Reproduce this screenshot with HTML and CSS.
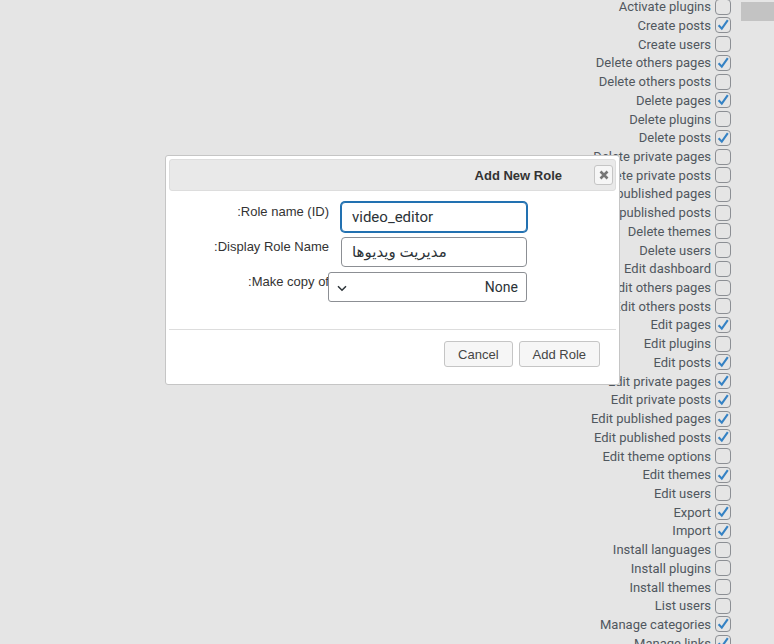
FILE: index.html
```html
<!DOCTYPE html>
<html lang="en">

<head>
    <meta charset="UTF-8">
    <meta name="viewport" content="width=device-width, initial-scale=1.0">
    <title>Add New Role</title>

    <link rel="stylesheet" href="styles.css">
</head>

<body>
    <div id="page">
        <ul class="caps">
            <li class="cap">Activate plugins <span class="box"></span></li>
            <li class="cap">Create posts <span class="box on"></span></li>
            <li class="cap">Create users <span class="box"></span></li>
            <li class="cap">Delete others pages <span class="box on"></span></li>
            <li class="cap">Delete others posts <span class="box"></span></li>
            <li class="cap">Delete pages <span class="box on"></span></li>
            <li class="cap">Delete plugins <span class="box"></span></li>
            <li class="cap">Delete posts <span class="box on"></span></li>
            <li class="cap">Delete private pages <span class="box"></span></li>
            <li class="cap">Delete private posts <span class="box"></span></li>
            <li class="cap">Delete published pages <span class="box"></span></li>
            <li class="cap">Delete published posts <span class="box"></span></li>
            <li class="cap">Delete themes <span class="box"></span></li>
            <li class="cap">Delete users <span class="box"></span></li>
            <li class="cap">Edit dashboard <span class="box"></span></li>
            <li class="cap">Edit others pages <span class="box"></span></li>
            <li class="cap">Edit others posts <span class="box"></span></li>
            <li class="cap">Edit pages <span class="box on"></span></li>
            <li class="cap">Edit plugins <span class="box"></span></li>
            <li class="cap">Edit posts <span class="box on"></span></li>
            <li class="cap">Edit private pages <span class="box on"></span></li>
            <li class="cap">Edit private posts <span class="box on"></span></li>
            <li class="cap">Edit published pages <span class="box on"></span></li>
            <li class="cap">Edit published posts <span class="box on"></span></li>
            <li class="cap">Edit theme options <span class="box"></span></li>
            <li class="cap">Edit themes <span class="box on"></span></li>
            <li class="cap">Edit users <span class="box"></span></li>
            <li class="cap">Export <span class="box on"></span></li>
            <li class="cap">Import <span class="box on"></span></li>
            <li class="cap">Install languages <span class="box"></span></li>
            <li class="cap">Install plugins <span class="box"></span></li>
            <li class="cap">Install themes <span class="box"></span></li>
            <li class="cap">List users <span class="box"></span></li>
            <li class="cap">Manage categories <span class="box on"></span></li>
            <li class="cap">Manage links <span class="box on"></span></li>
        </ul>
        <div class="side-btn"></div>
    </div>

    <div class="dialog">
        <div class="titlebar">
            <span class="title">Add New Role</span>
            <span class="close">
                <svg width="10" height="10" viewBox="0 0 10 10">
                    <path d="M1.5 1.5 L8.5 8.5 M8.5 1.5 L1.5 8.5" stroke="#777" stroke-width="2.6" />
                </svg>
            </span>
        </div>
        <div class="form">
            <label class="lbl">Role name (ID):</label>
            <input class="field focus" type="text" value="video_editor">
            <label class="lbl">Display Role Name:</label>
            <input class="field" type="text" value="مديريت ويديوها">
            <label class="lbl">Make copy of:</label>
            <div class="select">
                <svg width="10" height="7" viewBox="0 0 10 7">
                    <path d="M1 1.2 L5 5.2 L9 1.2" fill="none" stroke="#2c3338" stroke-width="1.5" />
                </svg>
                <span>None</span>
            </div>
        </div>
        <div class="buttons">
            <button class="btn">Cancel</button>
            <button class="btn">Add Role</button>
        </div>
    </div>

    <!-- checkmark for the ticked boxes -->
    <svg width="0" height="0" style="position:absolute">
        <defs>
            <symbol id="tick" viewBox="0 0 16 16">
                <path d="M3.6 8.2 L6.8 11.6 L12.8 3.2" fill="none" stroke="#3582c4" stroke-width="2.1" />
            </symbol>
        </defs>
    </svg>

    <script>
        var ticks = document.querySelectorAll('.box.on');
        ticks.forEach(box => {
            box.innerHTML = '<svg width="16" height="16"><use href="#tick"/></svg>';
        });
    </script>
</body>

</html>
```

FILE: styles.css
```css
body {
    margin: 0;
    background-color: #e5e5e5;
    font-family: Roboto, "Liberation Sans", sans-serif;
    overflow: hidden;
}

#page {
    display: flex;
    justify-content: flex-end;
    align-items: flex-start;
}

.caps {
    list-style: none;
    margin: -2.6px 0 0;
    padding: 0;
    display: flex;
    flex-direction: column;
    align-items: flex-end;
}

.cap {
    display: flex;
    align-items: center;
    gap: 4px;
    height: 18.73px;
    font-size: 13px;
    color: #50575e;
    white-space: nowrap;
}

.box {
    display: block;
    position: relative;
    width: 16px;
    height: 16px;
    box-sizing: border-box;
    border: 1px solid #8c8f94;
    border-radius: 4px;
}

.box svg {
    position: absolute;
    left: -1px;
    top: -1px;
}

.side-btn {
    width: 33px;
    height: 19px;
    margin: 2px 0 0 10px;
    background-color: #c3c3c3;
}

/* dialog */

.dialog {
    position: absolute;
    left: 165px;
    top: 155px;
    width: 455px;
    box-sizing: border-box;
    padding: 3px;
    background: #fff;
    border: 1px solid #c5c5c5;
    border-radius: 3px;
    font-family: "Liberation Sans", Arial, sans-serif;
}

.titlebar {
    display: flex;
    justify-content: flex-end;
    align-items: center;
    height: 32px;
    box-sizing: border-box;
    padding-right: 2px;
    background: #e9e9e9;
    border: 1px solid #dddddd;
    border-radius: 3px;
}

.title {
    font-size: 13px;
    font-weight: bold;
    color: #333;
    margin-right: 32px;
}

.close {
    display: flex;
    align-items: center;
    justify-content: center;
    width: 19px;
    height: 20px;
    box-sizing: border-box;
    background: #f6f6f6;
    border: 1px solid #c5c5c5;
    border-radius: 3px;
}

.form {
    display: grid;
    grid-template-columns: 1fr 186px;
    column-gap: 12px;
    row-gap: 5px;
    padding: 11px 89px 27px 0;
}

.lbl {
    direction: rtl;
    text-align: right;
    font-size: 13px;
    line-height: 16px;
    padding-top: 2px;
    color: #333;
}

.field {
    width: 186px;
    height: 30px;
    box-sizing: border-box;
    margin: 0;
    padding: 0 10px;
    border: 1px solid #8c8f94;
    border-radius: 4px;
    font-family: Roboto, "DejaVu Sans", sans-serif;
    font-size: 15px;
    color: #2c3338;
    outline: none;
}

.focus {
    border-color: #2271b1;
    box-shadow: 0 0 0 1px #2271b1;
}

.select {
    justify-self: end;
    display: flex;
    justify-content: space-between;
    align-items: center;
    width: 199px;
    height: 30px;
    box-sizing: border-box;
    padding: 0 8px 0 8px;
    background: #fff;
    border: 1px solid #8c8f94;
    border-radius: 3px;
    font-family: Roboto, sans-serif;
    font-size: 14px;
    color: #2c3338;
}

.select svg {
    margin-top: 2px;
}

.buttons {
    display: flex;
    justify-content: flex-end;
    gap: 6px;
    padding: 11px 16px 14px;
    border-top: 1px solid #dddddd;
}

.btn {
    height: 26px;
    padding: 0 13px;
    margin: 0;
    background: #f6f6f6;
    border: 1px solid #c5c5c5;
    border-radius: 3px;
    font-family: "Liberation Sans", Arial, sans-serif;
    font-size: 13px;
    color: #454545;
}
```
